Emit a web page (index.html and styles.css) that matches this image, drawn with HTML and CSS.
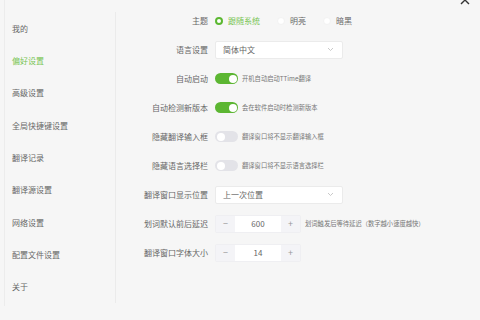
FILE: index.html
```html
<!DOCTYPE html>
<html lang="zh-CN">
<head>
    <meta charset="UTF-8">
    <meta name="viewport" content="width=device-width, initial-scale=1.0">
    <title>偏好设置</title>
    <link rel="stylesheet" href="styles.css">
</head>
<body>
    <div class="app">
        <svg class="close" width="12" height="12" viewBox="0 0 12 12">
            <path d="M2 2 L10 10 M10 2 L2 10" stroke="#333" stroke-width="1.4"/>
        </svg>

        <div class="sidebar">
            <div class="nav-item">我的</div>
            <div class="nav-item active">偏好设置</div>
            <div class="nav-item">高级设置</div>
            <div class="nav-item">全局快捷键设置</div>
            <div class="nav-item">翻译记录</div>
            <div class="nav-item">翻译源设置</div>
            <div class="nav-item">网络设置</div>
            <div class="nav-item">配置文件设置</div>
            <div class="nav-item">关于</div>
        </div>

        <div class="main">
            <div class="label">主题</div>
            <div class="control radios">
                <span class="radio checked"></span><span class="radio-text green">跟随系统</span>
                <span class="radio"></span><span class="radio-text">明亮</span>
                <span class="radio"></span><span class="radio-text">暗黑</span>
            </div>

            <div class="label">语言设置</div>
            <div class="control">
                <div class="select">
                    <span>简体中文</span>
                    <svg width="7" height="5" viewBox="0 0 7 5"><path d="M1 1 L3.5 3.5 L6 1" fill="none" stroke="#bbb" stroke-width="0.8"/></svg>
                </div>
            </div>

            <div class="label">自动启动</div>
            <div class="control">
                <span class="switch on"></span><span class="desc">开机自动启动TTime翻译</span>
            </div>

            <div class="label">自动检测新版本</div>
            <div class="control">
                <span class="switch on"></span><span class="desc">会在软件启动时检测新版本</span>
            </div>

            <div class="label">隐藏翻译输入框</div>
            <div class="control">
                <span class="switch"></span><span class="desc">翻译窗口将不显示翻译输入框</span>
            </div>

            <div class="label">隐藏语言选择栏</div>
            <div class="control">
                <span class="switch"></span><span class="desc">翻译窗口将不显示语言选择栏</span>
            </div>

            <div class="label">翻译窗口显示位置</div>
            <div class="control">
                <div class="select">
                    <span>上一次位置</span>
                    <svg width="7" height="5" viewBox="0 0 7 5"><path d="M1 1 L3.5 3.5 L6 1" fill="none" stroke="#bbb" stroke-width="0.8"/></svg>
                </div>
            </div>

            <div class="label">划词默认前后延迟</div>
            <div class="control">
                <div class="stepper">
                    <span class="step">−</span><span class="value">600</span><span class="step">+</span>
                </div>
                <span class="desc">划词触发后等待延迟（数字越小速度越快）</span>
            </div>

            <div class="label">翻译窗口字体大小</div>
            <div class="control">
                <div class="stepper">
                    <span class="step">−</span><span class="value">14</span><span class="step">+</span>
                </div>
            </div>
        </div>
    </div>
</body>
</html>
```

FILE: styles.css
```css
body {
    margin: 0;
    background-color: #f6f6f6;
    font-family: "Noto Sans CJK SC", "Noto Sans", sans-serif;
    color: #666;
}

.app {
    position: relative;
    display: flex;
    width: 476px;
    height: 306px;
    margin-left: 4px;
    border-left: 1px solid #ececec;
    overflow: hidden;
}

.close {
    position: absolute;
    top: -6px;
    right: 10px;
}

.sidebar {
    width: 110px;
    height: 291px;
    margin-top: 12px;
    border-right: 1px solid #ebebeb;
    display: flex;
    flex-direction: column;
}

.nav-item {
    height: 32.4px;
    display: flex;
    align-items: center;
    padding-left: 7px;
    font-size: 8px;
    color: #666;
}

.nav-item.active {
    color: #78c453;
}

.main {
    display: grid;
    grid-template-columns: 92px auto;
    grid-auto-rows: 29px;
    column-gap: 7px;
    padding-top: 6px;
    align-content: start;
}

.label {
    display: flex;
    align-items: center;
    justify-content: flex-end;
    font-size: 8px;
    color: #666;
    white-space: nowrap;
}

.control {
    display: flex;
    align-items: center;
    white-space: nowrap;
}

.radio {
    width: 8px;
    height: 8px;
    box-sizing: border-box;
    border-radius: 50%;
    background-color: #fff;
    border: 1px solid #f2f2f2;
}

.radio.checked {
    border: 2.5px solid #5cb832;
}

.radio-text {
    font-size: 8px;
    color: #666;
    margin-left: 5px;
    margin-right: 17px;
}

.radio-text.green {
    color: #78c453;
}

.select {
    width: 128px;
    height: 18px;
    box-sizing: border-box;
    background-color: #fff;
    border: 1px solid #ebebeb;
    border-radius: 2px;
    display: flex;
    align-items: center;
    justify-content: space-between;
    padding: 0 8px 0 7px;
    font-size: 8px;
    color: #666;
}

.switch {
    position: relative;
    width: 23px;
    height: 11px;
    border-radius: 6px;
    background-color: #e3e3e8;
}

.switch::after {
    content: "";
    position: absolute;
    top: 1.5px;
    left: 1.5px;
    width: 8px;
    height: 8px;
    border-radius: 50%;
    background-color: #fff;
}

.switch.on {
    background-color: #5cb632;
}

.switch.on::after {
    left: 13.5px;
}

.desc {
    font-size: 6.3px;
    color: #777;
    margin-left: 4px;
}

.stepper {
    display: flex;
    height: 18px;
    width: 86px;
    border: 1px solid #efeff2;
    border-radius: 2px;
    box-sizing: border-box;
    background-color: #fff;
}

.step {
    width: 19px;
    background-color: #f4f4f7;
    display: flex;
    align-items: center;
    justify-content: center;
    font-size: 9px;
    color: #999;
}

.value {
    flex: 1;
    display: flex;
    align-items: center;
    justify-content: center;
    font-size: 8px;
    color: #666;
}
```
